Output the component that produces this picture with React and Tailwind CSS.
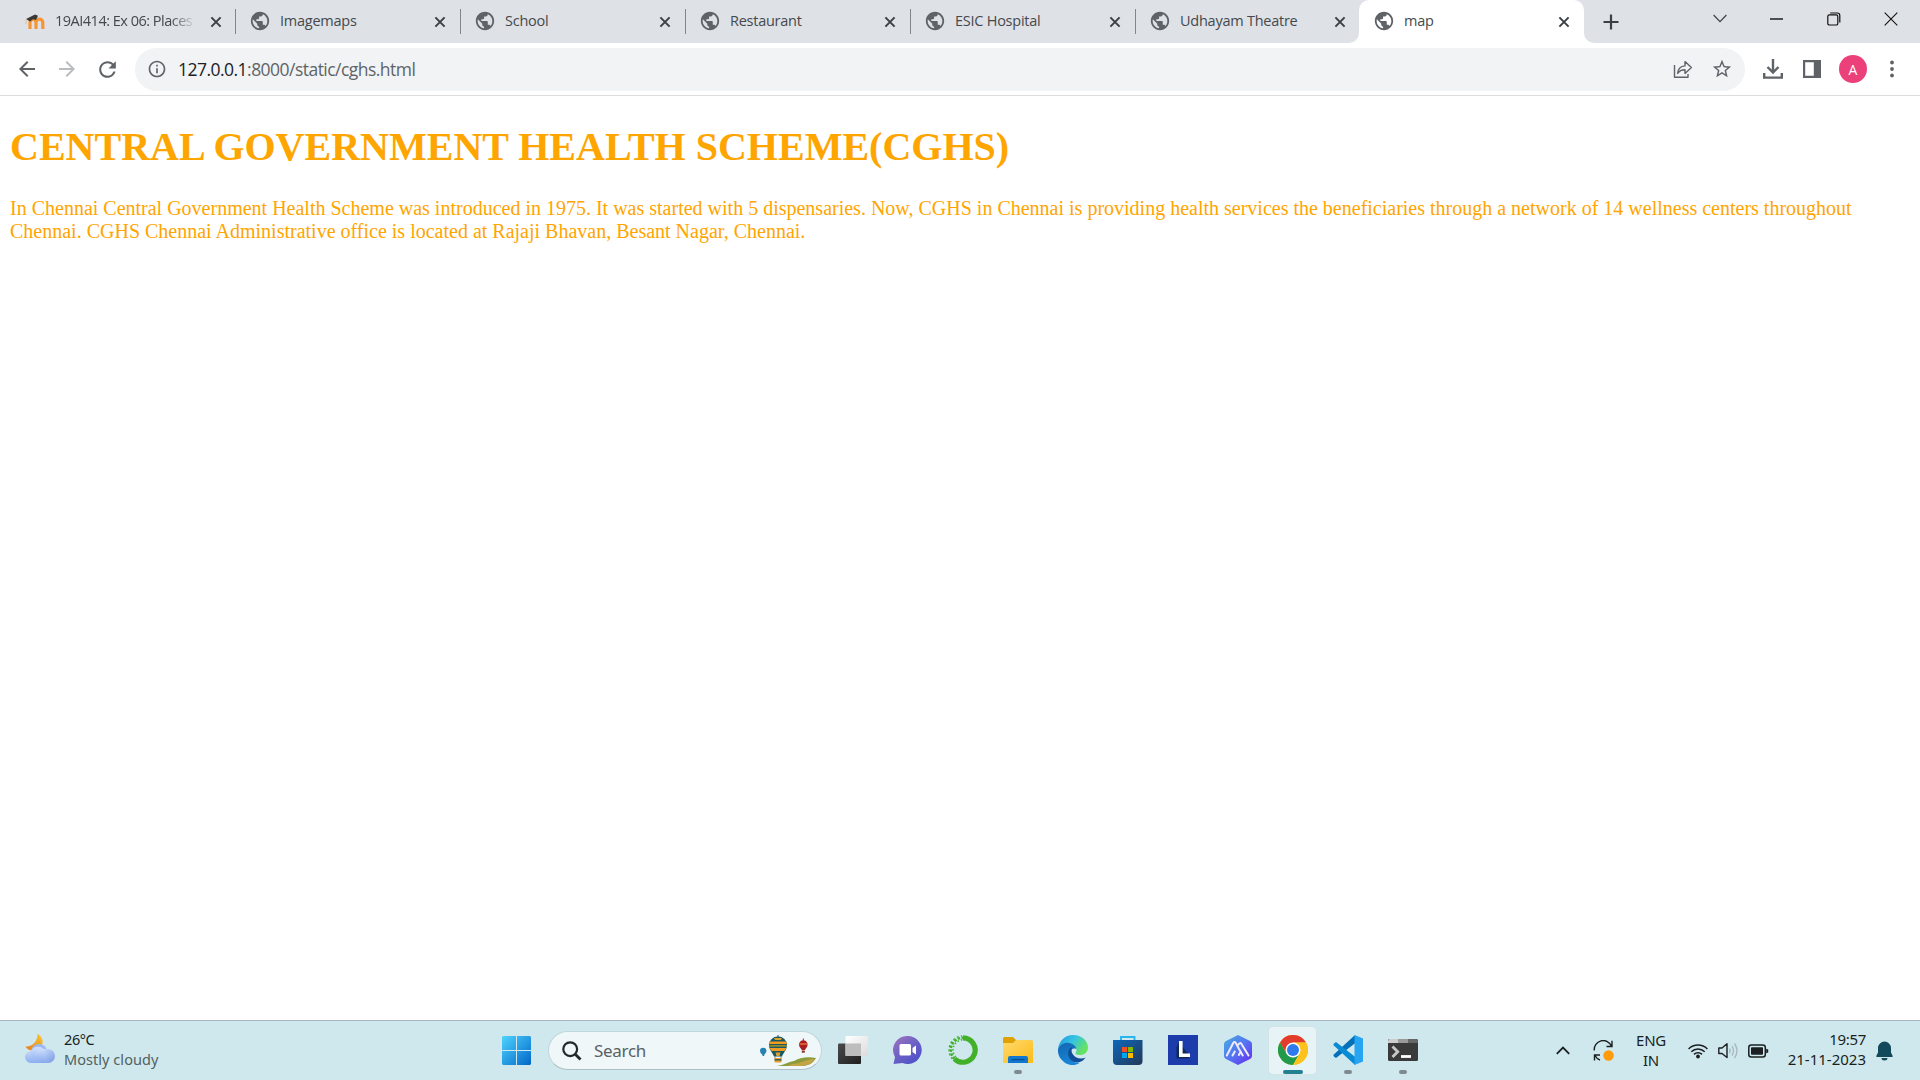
import React from "react";
import { MdPublic, MdArrowBack, MdArrowForward, MdRefresh, MdInfoOutline, MdStarBorder } from "react-icons/md";

const tabs = ["Imagemaps", "School", "Restaurant", "ESIC Hospital", "Udhayam Theatre"];

function CloseX() {
  return (
    <svg width="12" height="12" viewBox="0 0 12 12" className="shrink-0" stroke="#3c4043" strokeWidth="2">
      <path d="M1.4 1.4l9.2 9.2M10.6 1.4l-9.2 9.2" />
    </svg>
  );
}

function MoodleIcon() {
  return (
    <svg width="20" height="16" viewBox="0 0 20 16" className="shrink-0">
      <path d="M5 15V8.5a2.6 2.6 0 0 1 6 0V15M11 15V8.5a3.2 3.2 0 0 1 6.8 0V15" fill="none" stroke="#f79433" strokeWidth="3.2" />
      <path d="M1 5L10 .5l3 1.2-2 4.2-3-.6-3 2.2z" fill="#3b3838" />
      <path d="M1.2 5.2L.8 10" stroke="#f2b98a" strokeWidth="1" />
    </svg>
  );
}

function Tab({ title }) {
  return (
    <div className="flex h-[43px] w-[225px] shrink-0 items-center pl-[14px] pr-[14px]">
      <MdPublic size={22} color="#5f6368" className="mt-[-1px] shrink-0" />
      <span className="ml-[9px] flex-1 whitespace-nowrap pb-[2px]">{title}</span>
      <CloseX />
    </div>
  );
}

function TabStrip() {
  return (
    <div className="flex h-[43px] bg-[#dee1e6] font-['Open_Sans',sans-serif] text-[14.5px] tracking-[-0.25px] text-[#45494d]">
      <div className="flex w-[235px] items-center pl-[25px] pr-[13px]">
        <MoodleIcon />
        <span className="ml-[10px] w-[141px] overflow-hidden whitespace-nowrap pb-[2px] tracking-[-0.5px] [mask-image:linear-gradient(to_right,black_82%,transparent_100%)]">
          19AI414: Ex 06: Places
        </span>
        <span className="ml-auto flex">
          <CloseX />
        </span>
      </div>
      {tabs.map((t) => (
        <div key={t} className="flex items-center">
          <div className="-mr-px h-[25px] w-px bg-[#80868b]" />
          <Tab title={t} />
        </div>
      ))}
      <div className="relative -ml-px w-[225px] rounded-t-[10px] bg-white">
        <svg className="absolute -left-[10px] bottom-0" width="10" height="10">
          <path d="M10 0v10H0A10 10 0 0 0 10 0" fill="#fff" />
        </svg>
        <svg className="absolute -right-[10px] bottom-0" width="10" height="10">
          <path d="M0 0v10h10A10 10 0 0 1 0 0" fill="#fff" />
        </svg>
        <Tab title="map" />
      </div>
      <div className="flex w-[54px] items-center justify-center">
        <svg width="16" height="16" viewBox="0 0 16 16" stroke="#3c4043" strokeWidth="2.2">
          <path d="M8 .5v15M.5 8h15" />
        </svg>
      </div>
      <div className="ml-auto flex h-[37px] items-center pr-px">
        <span className="flex w-[57px] justify-center">
          <svg width="14" height="9" viewBox="0 0 14 9" fill="none" stroke="#3c4043" strokeWidth="1.2">
            <path d="M.6 1L7 7.6 13.4 1" />
          </svg>
        </span>
        <span className="flex w-[57px] justify-center">
          <svg width="13" height="2" viewBox="0 0 13 2"><path d="M0 1h13" stroke="#111" strokeWidth="1.4" /></svg>
        </span>
        <span className="flex w-[57px] justify-center">
          <svg width="14" height="14" viewBox="0 0 14 14" fill="none" stroke="#111" strokeWidth="1.2">
            <rect x=".8" y="2.8" width="10" height="10.2" rx="1.6" />
            <path d="M3.2 1h7a2.6 2.6 0 0 1 2.6 2.6v7" />
          </svg>
        </span>
        <span className="flex w-[57px] justify-center">
          <svg width="14" height="14" viewBox="0 0 14 14" stroke="#111" strokeWidth="1.1"><path d="M.7 .7l12.6 12.6M13.3 .7L.7 13.3" /></svg>
        </span>
      </div>
    </div>
  );
}

function Toolbar() {
  return (
    <div className="flex h-[53px] items-center border-b border-[#dcdcdd] bg-white font-['Open_Sans',sans-serif]">
      <div className="flex w-[135px] items-center pl-[15px]">
        <MdArrowBack size={24} color="#5f6368" />
        <MdArrowForward size={24} color="#babcbe" className="ml-[16px]" />
        <MdRefresh size={25} color="#5f6368" className="ml-[16px]" />
      </div>
      <div className="flex h-[43px] w-[1610px] items-center rounded-full bg-[#f1f3f4] pl-[12px] pr-[12px]">
        <MdInfoOutline size={20} color="#5f6368" />
        <span className="ml-[11px] text-[17.5px] tracking-[-0.53px] text-[#5f6368]">
          <span className="text-[#202124]">127.0.0.1</span>:8000/static/cghs.html
        </span>
        <svg width="20" height="20" viewBox="0 0 20 20" className="ml-auto" fill="none" stroke="#5f6368" strokeWidth="1.4" strokeLinejoin="round">
          <path d="M1.5 6v12.3H15V15" />
          <path d="M4.6 14.5c.4-4.6 3-7.4 7.4-7.6V2.6l6.4 6-6.4 5.8v-3.7c-3.400 0-5.600.9-7.400 3.800z" />
        </svg>
        <MdStarBorder size={22} color="#5f6368" className="ml-[18px]" />
      </div>
      <div className="flex flex-1 items-center">
        <svg width="20" height="21" viewBox="0 0 20 21" className="ml-[18px]" fill="none" stroke="#5f6368" strokeWidth="2.4">
          <path d="M10 0v13M4.500 8l5.500 5.500L15.500 8M1.200 14v4.600h17.600V14" />
        </svg>
        <svg width="18" height="18" viewBox="0 0 18 18" className="ml-[20px]">
          <path d="M0 0h18v18H0zM2.200 2.200v13.600h8.600V2.200z" fill="#5f6368" fillRule="evenodd" />
        </svg>
        <div className="ml-[18px] flex h-[28px] w-[28px] items-center justify-center rounded-full bg-[#ec407a] text-[14px] text-white">A</div>
        <svg width="4" height="18" viewBox="0 0 4 18" className="ml-[23px]" fill="#5f6368">
          <circle cx="2" cy="2.500" r="1.900" /><circle cx="2" cy="9" r="1.900" /><circle cx="2" cy="15.500" r="1.900" />
        </svg>
      </div>
    </div>
  );
}

function WeatherIcon() {
  return (
    <svg width="30" height="30" viewBox="0 0 30 30" className="mb-[3px]">
      <defs>
        <linearGradient id="moon" x1="0" y1="1" x2="1" y2="0"><stop offset="0" stopColor="#e8791c" /><stop offset="1" stopColor="#fcc92d" /></linearGradient>
        <linearGradient id="cloud" x1="0" y1="0" x2="1" y2="1"><stop offset="0" stopColor="#dce8fd" /><stop offset=".5" stopColor="#a9c1f1" /><stop offset="1" stopColor="#7797e2" /></linearGradient>
        <linearGradient id="cloud2" x1="0" y1="0" x2="0" y2="1"><stop offset="0" stopColor="#d7e5fe" /><stop offset="1" stopColor="#86a8ee" /></linearGradient>
      </defs>
      <path d="M12.500 0a8.600 8.600 0 0 1 2 14.500C9 18 3 17 .5 12.500 8 13 12.500 7 12.500 0" fill="url(#moon)" />
      <circle cx="14" cy="18" r="8" fill="#9cb8f1" />
      <rect x="10" y="15" width="20" height="14" rx="7" fill="url(#cloud)" />
      <path d="M6 17a8 8 0 0 1 14 0c2 4 2 8 0 12H6A6 6 0 0 1 6 17" fill="url(#cloud2)" opacity=".9" />
    </svg>
  );
}

function StartIcon() {
  return (
    <svg width="29" height="29" viewBox="0 0 29 29">
      <defs><linearGradient id="win" x1="0" y1="0" x2="1" y2="1"><stop offset="0" stopColor="#4fd3ff" /><stop offset="1" stopColor="#0067c8" /></linearGradient></defs>
      <path d="M1 0h13v14H0V1zM15 0h13l1 1v13H15zM0 15h14v14H1l-1-1zM15 15h14v13l-1 1H15z" fill="url(#win)" />
    </svg>
  );
}

function Balloons() {
  return (
    <svg width="57" height="32" viewBox="0 0 57 32">
      <path d="M17 31c7-1 11-4 17-5 5-3 13-5 22-3-3 6-9 8-14 8z" fill="#8c9c3d" />
      <path d="M32 29c8 0 14-5 23-5-4 5-9 7-14 7H28z" fill="#c3a544" />
      <path d="M0 16a3.200 3.200 0 0 1 6.400 0c0 2-2 3-2.200 4v1H2.500v-1C2 19 0 18 0 16" fill="#2583b4" />
      <path d="M18 0v4" stroke="#1a5b6c" strokeWidth="1" />
      <path d="M9 10a9 8.500 0 0 1 18 0c0 5-4 8-5 11.500h-8c-1-3.500-5-6.500-5-11.500" fill="#1b5661" />
      <path d="M10 6.500h16l1 2.500H9zM9.600 13h16.800l-2 3H11.500z" fill="#f29c1f" />
      <path d="M9.200 10h17.600v1.800H9.200z" fill="#8c8a2b" />
      <path d="M14 3h8l-1 2h-6zM15.500 17.500h5l-1 3.500h-3z" fill="#d8a22e" />
      <path d="M15 21.500v2M21 21.500v2" stroke="#65594a" strokeWidth=".8" />
      <rect x="14.500" y="23" width="7" height="4.500" rx="1" fill="#e99d28" />
      <path d="M14.500 24.800h7" stroke="#1b5661" strokeWidth="1.300" />
      <path d="M39 9.500a4.300 4.300 0 0 1 8.600 0c0 3-2.200 4-2.600 5.500h-3.200c-.4-1.500-2.800-2.500-2.800-5.500" fill="#a91e22" />
      <path d="M39.500 8h7.600v2h-7.600z" fill="#d95a2d" />
      <path d="M43.300 3.500v2" stroke="#a91e22" /><rect x="41.800" y="15.500" width="3" height="2.200" fill="#8b3428" />
    </svg>
  );
}

const appIcons = [
  {
    id: "taskview",
    icon: (
      <svg width="30" height="30" viewBox="0 0 30 30">
        <defs>
          <linearGradient id="tva" x1="0" y1="0" x2="1" y2="1"><stop offset="0" stopColor="#4a4a4a" /><stop offset="1" stopColor="#1f1f1f" /></linearGradient>
          <linearGradient id="tvb" x1="0" y1="0" x2="1" y2="1"><stop offset="0" stopColor="#fff" /><stop offset="1" stopColor="#dcdcdc" /></linearGradient>
        </defs>
        <rect x="0" y="8.500" width="23" height="20.500" rx="1" fill="url(#tva)" />
        <rect x="7.500" y="1" width="22.500" height="20" rx="1" fill="url(#tvb)" />
        <path d="M7.500 8.500H23V21H7.500z" fill="#bdbdbd" />
      </svg>
    ),
  },
  {
    id: "chat",
    icon: (
      <svg width="30" height="30" viewBox="0 0 30 30">
        <defs><linearGradient id="chat" x1="0" y1="0" x2=".8" y2="1"><stop offset="0" stopColor="#a474bd" /><stop offset=".5" stopColor="#6e62c4" /><stop offset="1" stopColor="#4c4fcb" /></linearGradient></defs>
        <path d="M14.500 1a14 14 0 1 1-5 27L.5 29l1.500-7A14 14 0 0 1 14.500 1" fill="url(#chat)" />
        <rect x="6.500" y="9" width="11.500" height="11.500" rx="1.500" fill="#fff" />
        <path d="M19.500 13l3.500-2.500V19.500L19.500 17z" fill="#fff" />
      </svg>
    ),
  },
  {
    id: "anaconda",
    icon: (
      <svg width="30" height="30" viewBox="0 0 30 30" fill="none" stroke="#43b02a">
        <path d="M15 2.800A12.200 12.200 0 1 1 6.500 23.800" strokeWidth="5.200" />
        <path d="M6.500 23.800A12.200 12.200 0 0 1 15 2.800" strokeWidth="2.500" strokeDasharray="2.500 1.400" />
        <path d="M7.800 22A10.200 10.200 0 0 1 15 4.800" strokeWidth="1.500" strokeDasharray="1.500 2" />
        <path d="M4.300 24A14 14 0 0 1 14 1" strokeWidth="1.300" strokeDasharray="2 2.200" />
      </svg>
    ),
  },
  {
    id: "explorer",
    mark: "bg-[#7d8b8f] w-[8px]",
    icon: (
      <svg width="30" height="30" viewBox="0 0 30 30">
        <defs><linearGradient id="fold" x1="0" y1="0" x2="1" y2="1"><stop offset="0" stopColor="#ffda6d" /><stop offset="1" stopColor="#fcbb18" /></linearGradient></defs>
        <path d="M0 3.500Q0 2 1.500 2H10l3 3h15v5H0z" fill="#e0a106" />
        <path d="M0 8h10l3-3h15.500q1.500 0 1.500 1.500V28H0z" fill="url(#fold)" />
        <path d="M5 28v-5q0-2 2-2h16q2 0 2 2v5z" fill="#1079cf" />
        <path d="M8.500 24.600h13" stroke="#0a4c8c" strokeWidth="1.200" />
      </svg>
    ),
  },
  {
    id: "edge",
    icon: (
      <svg width="30" height="30" viewBox="0 0 30 30">
        <defs>
          <linearGradient id="ea" x1="0" y1="0" x2="1" y2=".5"><stop offset="0" stopColor="#2292d9" /><stop offset=".5" stopColor="#33c3e6" /><stop offset="1" stopColor="#67e35f" /></linearGradient>
          <linearGradient id="eb" x1="0" y1="0" x2=".3" y2="1"><stop offset="0" stopColor="#1566b0" /><stop offset="1" stopColor="#1685d8" /></linearGradient>
        </defs>
        <path d="M0 14C1 6 7 0 15 0c9 0 15 6 15 12.500 0 5-4 7.500-8 7.500-3 0-5-1-4.500-2 2-2 1.500-7-4-8.500C8 8 2 9 0 14" fill="url(#ea)" />
        <path d="M0 14c2-5 8-7.500 13-5.500 4 1.500 5.500 4 5.500 6-1-2-6-1-7 3-1 5 3 11 10 10.500C17 31 11 31 6 27 1.500 23.500-.5 19 0 14" fill="url(#eb)" />
        <path d="M12 13c-4 5-1.500 14 7 14.500 4 0 7-2.500 8.500-5-4 2-10 1-12.500-3-1.800-2.500-2-5-.5-7.500z" fill="#104f98" />
      </svg>
    ),
  },
  {
    id: "store",
    icon: (
      <svg width="30" height="30" viewBox="0 0 30 30">
        <defs><linearGradient id="store" x1="0" y1="0" x2="1" y2="1"><stop offset="0" stopColor="#0c68bd" /><stop offset="1" stopColor="#243857" /></linearGradient></defs>
        <path d="M8 7V2h13.500v5" fill="none" stroke="#28b4ec" strokeWidth="1.900" />
        <path d="M0 5h29.500v21q0 4-4 4H4q-4 0-4-4z" fill="url(#store)" />
        <path d="M9 12h5v5H9z" fill="#f25022" /><path d="M15 12h5v5h-5z" fill="#7fba00" />
        <path d="M9 18h5v5H9z" fill="#00a4ef" /><path d="M15 18h5v5h-5z" fill="#ffb900" />
      </svg>
    ),
  },
  {
    id: "lively",
    icon: (
      <svg width="30" height="30" viewBox="0 0 30 30">
        <path d="M0 0h30v30H0z" fill="#1d3cac" />
        <path d="M11 7L8.500 12v11.500H20l2-2z" fill="#0d2b57" />
        <path d="M12.800 6v14.300H22" fill="none" stroke="#fff" strokeWidth="3.600" />
      </svg>
    ),
  },
  {
    id: "hex",
    icon: (
      <svg width="30" height="30" viewBox="0 0 30 30">
        <defs><linearGradient id="hex" x1="0" y1="0" x2="1" y2="1"><stop offset="0" stopColor="#47aede" /><stop offset=".5" stopColor="#5475f2" /><stop offset="1" stopColor="#6a26ee" /></linearGradient></defs>
        <path d="M15 0l12 6q2 1 2 3v12q0 2-2 3l-12 6-12-6q-2-1-2-3V9q0-2 2-3z" fill="url(#hex)" />
        <path d="M3.800 20.500L10.200 8q1.300-2 2.600 0l3.200 6 3.800 6.500M9.500 20.500l2.300-4M15.800 20l2-3.500M15.500 9.500q1.500-2.500 3-.5l7 11.500" fill="none" stroke="#f0eaff" strokeWidth="2" strokeLinecap="round" strokeLinejoin="round" />
      </svg>
    ),
  },
  {
    id: "chrome",
    active: true,
    mark: "bg-[#23808f] w-[20px]",
    icon: (
      <svg width="30" height="30" viewBox="0 0 30 30">
        <circle cx="15" cy="15" r="15" fill="#fcc31e" />
        <path d="M2 7.500A15 15 0 0 1 28 7.500H15L8.500 18.700z" fill="#e33b2e" />
        <path d="M2 7.500A15 15 0 0 0 15 30l6.500-11.200L15 22.500 8.500 18.700z" fill="#219a4b" />
        <path d="M15 7.500h13A15 15 0 0 1 15 30l6.500-11.200z" fill="#fcc31e" />
        <circle cx="15" cy="15" r="7.500" fill="#fff" />
        <circle cx="15" cy="15" r="6" fill="#2f7bee" />
      </svg>
    ),
  },
  {
    id: "code",
    mark: "bg-[#7d8b8f] w-[8px]",
    icon: (
      <svg width="30" height="30" viewBox="0 0 30 30">
        <path d="M1 21.500L3 23 23 7.500 22 0 .8 19.500q-.8 1 .2 2" fill="#0470b8" />
        <path d="M1 8.500L3 7l20 15.500-1 7.500L.8 10.500q-.8-1 .2-2" fill="#098ad4" />
        <path d="M21.500 0L30 3.500v23L21.500 30z" fill="#27a4f2" />
      </svg>
    ),
  },
  {
    id: "terminal",
    mark: "bg-[#7d8b8f] w-[8px]",
    icon: (
      <svg width="30" height="30" viewBox="0 0 30 30">
        <rect y="4" width="30" height="22" rx="1.500" fill="#3a3a3a" />
        <path d="M1.500 4H10v4H0V5.500z" fill="#cdcdcd" /><path d="M10 4h10v4H10z" fill="#999" /><path d="M20 4h8.500L30 5.500V8H20z" fill="#666" />
        <path d="M4.500 11.500l5.200 5.200-5.200 5.200" fill="none" stroke="#c8c8c8" strokeWidth="2.800" />
        <path d="M13 21.500h10" stroke="#fff" strokeWidth="2.800" />
      </svg>
    ),
  },
];

function Taskbar() {
  return (
    <div className="flex h-[60px] border-t border-[#a9b7bf] bg-[#cfe8ee] font-['Noto_Sans',sans-serif] text-[#1b1f21]">
      <div className="flex w-[489px] items-center pl-[25px]">
        <WeatherIcon />
        <div className="ml-[9px] pb-[3px] text-[14.500px] leading-[20px]">
          <div className="tracking-[-0.4px]">26°C</div>
          <div className="tracking-[0.05px] text-[#53605f]">Mostly cloudy</div>
        </div>
      </div>
      <div className="flex w-[55px] items-center justify-center">
        <StartIcon />
      </div>
      <div className="ml-[4px] mt-[10px] flex h-[39px] w-[274px] items-center rounded-full border border-b-[#aebfc5] border-l-[#c0d6dc] border-r-[#c0d6dc] border-t-[#c0d6dc] bg-[#eff7f9] pl-[13px] pr-[4px]">
        <svg width="20" height="20" viewBox="0 0 20 20" fill="none" stroke="#25282a" strokeWidth="2.200">
          <circle cx="8.200" cy="8.200" r="6.900" /><path d="M13 13l5.500 5.500" strokeWidth="2.800" />
        </svg>
        <span className="ml-[12px] text-[17px] tracking-[-0.3px] text-[#596164]">Search</span>
        <span className="ml-auto"><Balloons /></span>
      </div>
      <div className="ml-[3px] flex">
        {appIcons.map((a) => (
          <div key={a.id} className="flex w-[55px] justify-center pt-[5px]">
            <div className={a.active ? "flex h-[49px] w-[49px] flex-col items-center rounded-[5px] border border-[#d5e3e7] bg-[#e6f3f7] pt-[8px]" : "flex h-[49px] w-[49px] flex-col items-center pt-[9px]"}>
              {a.icon}
              {a.mark && <div className={"mt-[5px] h-[4px] shrink-0 rounded-full " + a.mark} />}
            </div>
          </div>
        ))}
      </div>
      <div className="ml-auto flex items-center pr-[27px] text-[15px]">
        <svg width="14" height="9" viewBox="0 0 14 9" fill="none" stroke="#1b1f21" strokeWidth="1.800"><path d="M.8 7.800L7 1.500l6.200 6.300" /></svg>
        <svg width="21" height="22" viewBox="0 0 21 22" className="ml-[23px]" fill="none" stroke="#1b1f21" strokeWidth="1.400">
          <path d="M1.300 10.500A9 9 0 0 1 18.500 6M19 .8V6.500h-5.500M7 20a9 9 0 0 1-5-4.500M1.500 20.500v-5.500H7" />
          <circle cx="15.500" cy="15.500" r="5.200" fill="#ff9a0a" stroke="none" />
        </svg>
        <div className="ml-[21px] w-[32px] pb-[2px] text-center leading-[20px] tracking-[-0.3px]">ENG<br />IN</div>
        <svg width="20" height="16" viewBox="0 0 20 16" className="ml-[21px]" fill="none" stroke="#1b1f21" strokeWidth="1.500">
          <path d="M.6 6a13.300 13.300 0 0 1 18.800 0M3.300 8.800a9.500 9.500 0 0 1 13.400 0M6 11.400a5.700 5.700 0 0 1 8 0" />
          <circle cx="10" cy="13.500" r="1.900" fill="#1b1f21" stroke="none" />
        </svg>
        <svg width="20" height="18" viewBox="0 0 20 18" className="ml-[10px]" fill="none" stroke="#1b1f21" strokeWidth="1.400" strokeLinejoin="round">
          <path d="M.8 6v5.500h3.200l5 4V1.800L4 6z" />
          <path d="M11.500 6.500q1.200 2.200 0 4.600M14 4q3 4.800 0 9.600M16.500 1.500q5 7.300 0 14.500" stroke="#a8babf" />
        </svg>
        <svg width="21" height="14" viewBox="0 0 21 14" className="ml-[10px]">
          <rect x=".8" y="1" width="16.500" height="12" rx="2.500" fill="none" stroke="#1b1f21" strokeWidth="1.500" />
          <rect x="3" y="3.200" width="12" height="7.600" rx=".8" fill="#1b1f21" />
          <path d="M18.200 4.800l2 .7v3l-2 .7z" fill="#1b1f21" />
        </svg>
        <div className="ml-[17px] w-[80px] whitespace-nowrap pb-[3px] text-right leading-[20px]"><span className="tracking-[-0.3px]">19:57</span><br />21-11-2023</div>
        <svg width="17" height="20" viewBox="0 0 17 20" className="ml-[10px]" fill="#134a5b">
          <path d="M8.500.5a6.500 6.500 0 0 1 6.500 6.500v4.500l1.700 3.500q.3 1-.7 1H1q-1 0-.7-1L2 11.500V7A6.500 6.500 0 0 1 8.500.5M5.500 17h6a3 2.500 0 0 1-6 0" />
        </svg>
      </div>
    </div>
  );
}

export default function App() {
  return (
    <div className="flex h-[1080px] w-[1920px] flex-col overflow-hidden bg-white">
      <TabStrip />
      <Toolbar />
      <main className="flex-1 px-[10px] pt-[28px] font-['Liberation_Serif',serif] text-[#ffa500]">
        <h1 className="text-[40px] font-bold leading-[46px]">CENTRAL GOVERNMENT HEALTH SCHEME(CGHS)</h1>
        <p className="mt-[27px] text-[20px] leading-[23px]">
          In Chennai Central Government Health Scheme was introduced in 1975. It was started with 5 dispensaries. Now, CGHS in Chennai is providing health services the beneficiaries through a network of 14 wellness centers throughout Chennai. CGHS Chennai Administrative office is located at Rajaji Bhavan, Besant Nagar, Chennai.
        </p>
      </main>
      <Taskbar />
    </div>
  );
}
